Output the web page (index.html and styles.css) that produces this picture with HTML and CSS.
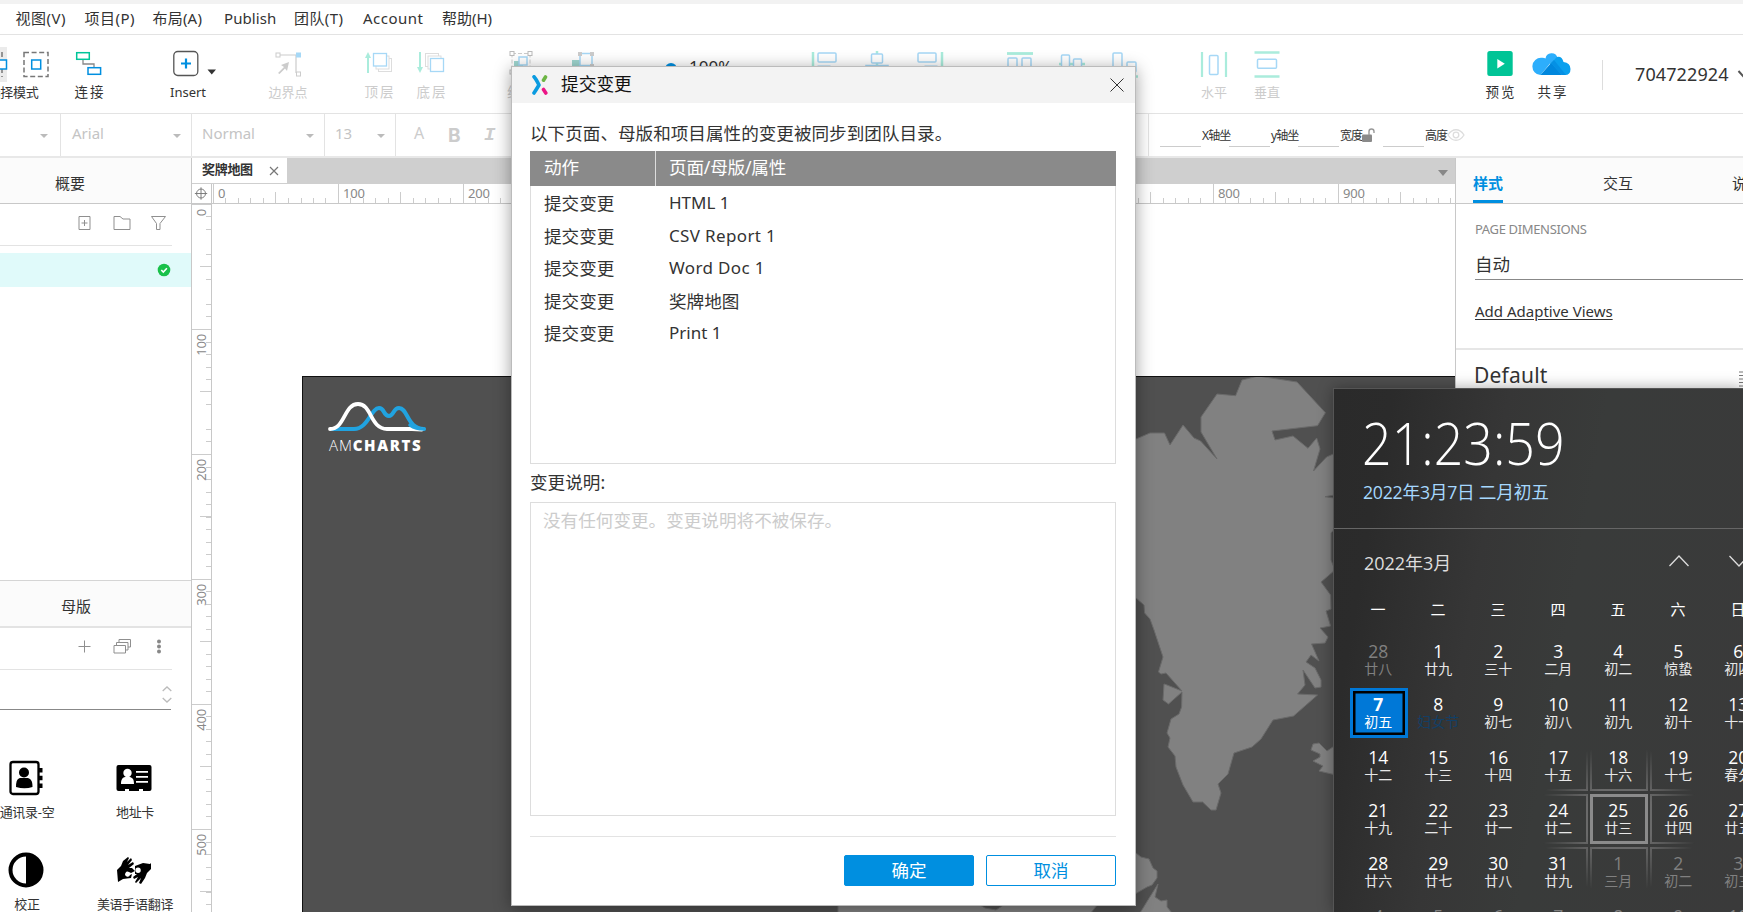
FILE: index.html
```
<!DOCTYPE html>
<html lang="zh-CN">
<head>
<meta charset="utf-8">
<title>提交变更</title>
<link rel="stylesheet" href="styles.css">
</head>
<body>
<div class="app">
  <nav class="menubar">
    <span class="m-view">视图(V)</span><span class="m-project">项目(P)</span><span class="m-layout">布局(A)</span><span class="m-publish">Publish</span><span class="m-team">团队(T)</span><span class="m-account">Account</span><span class="m-help">帮助(H)</span>
  </nav>

  <header class="toolbar">
    <div class="tool tool-select">
      <svg width="56" height="36" viewBox="0 0 56 36"><rect width="7" height="35" fill="#ebebeb"/><path d="M2 5v25" stroke="#777" stroke-width="1.5" stroke-dasharray="5 3"/><path d="M0 13h6.500v9H0" fill="#fff" stroke="#008fe0" stroke-width="1.500"/><rect x="24" y="5.500" width="24" height="24" fill="none" stroke="#777" stroke-width="1.500" stroke-dasharray="5 2.600"/><rect x="31.700" y="13" width="9" height="9" fill="#fff" stroke="#008fe0" stroke-width="1.500"/></svg>
      <span>选择模式</span>
    </div>
    <div class="tool tool-connect">
      <svg width="28" height="36" viewBox="0 0 28 36"><path d="M8 12v5h11v4" fill="none" stroke="#888" stroke-width="1.300"/><rect x="1.700" y="5.700" width="12.600" height="6.600" fill="#fff" stroke="#00c59a" stroke-width="1.500"/><rect x="13" y="20.700" width="12.600" height="6.600" fill="#fff" stroke="#008fe0" stroke-width="1.500"/></svg>
      <span class="wide">连接</span>
    </div>
    <div class="tool tool-insert">
      <svg width="44" height="36" viewBox="0 0 44 36"><rect x=".8" y="4.500" width="24" height="24" rx="4" fill="#fff" stroke="#555" stroke-width="1.300"/><path d="M13 11.500v10M8 16.500h10" stroke="#008fe0" stroke-width="2.200"/><path d="M34.500 22.500h8.500l-4.250 5z" fill="#333"/></svg>
      <span>Insert</span>
    </div>
    <div class="tool tool-edge dim">
      <svg width="28" height="36" viewBox="0 0 28 36"><path d="M4 8h18v18" fill="none" stroke="#ccc" stroke-width="1.200"/><rect x="2" y="6" width="4" height="4" fill="#fff" stroke="#ccc"/><rect x="22" y="5.500" width="5" height="5" fill="#a6d8f6"/><rect x="22.500" y="25" width="4" height="4" fill="#fff" stroke="#ccc"/><path d="M4 26l6-6-3-2 8-3-2 9-2-2.500-5.500 5.500z" fill="#ccc"/></svg>
      <span>边界点</span>
    </div>
    <div class="tool tool-top dim">
      <svg width="28" height="36" viewBox="0 0 28 36"><path d="M3 26V8" stroke="#aaecdc" stroke-width="2"/><path d="M0 11l3-6 3 6z" fill="#aaecdc"/><rect x="13.500" y="11.500" width="13" height="13" fill="#fff" stroke="#ddd"/><rect x="11" y="9" width="13" height="13" fill="#fff" stroke="#ddd"/><rect x="8.500" y="6.500" width="13" height="12.500" fill="#fff" stroke="#a6d8f6" stroke-width="1.300"/></svg>
      <span class="wide">顶层</span>
    </div>
    <div class="tool tool-bottom dim">
      <svg width="28" height="36" viewBox="0 0 28 36"><path d="M3 5v17" stroke="#aaecdc" stroke-width="2"/><path d="M0 20l3 6 3-6z" fill="#aaecdc"/><rect x="8.500" y="6.500" width="13" height="13" fill="#fff" stroke="#ddd"/><rect x="11" y="9" width="13" height="13" fill="#fff" stroke="#ddd"/><rect x="13.500" y="11.500" width="13" height="13" fill="#fff" stroke="#a6d8f6" stroke-width="1.300"/></svg>
      <span class="wide">底层</span>
    </div>
    <div class="tool tool-group dim">
      <svg width="28" height="36" viewBox="0 0 28 36"><rect x="4" y="6.500" width="18" height="20" fill="none" stroke="#ccc" stroke-dasharray="4 2"/><rect x="2" y="4.500" width="4" height="4" fill="#fff" stroke="#bbb"/><rect x="20" y="4.500" width="4" height="4" fill="#fff" stroke="#bbb"/><rect x="2" y="23" width="4" height="4" fill="#fff" stroke="#bbb"/><rect x="6" y="14" width="9" height="9" fill="#9fd6cf"/><rect x="11" y="10" width="8" height="8" fill="#fff" stroke="#a6d8f6" stroke-width="1.500"/></svg>
      <span class="wide">组合</span>
    </div>
    <div class="tool tool-ungroup dim">
      <svg width="28" height="36" viewBox="0 0 28 36"><rect x="4" y="13" width="10" height="10" fill="#9fd6cf"/><rect x="12" y="6.500" width="12" height="12" fill="#fff" stroke="#a6d8f6" stroke-width="1.500"/><path d="M10 5h4v4h-4zM22 5h4v4h-4zM22 17h4v4h-4z" fill="#ccc"/></svg>
    </div>
    <div class="tool tool-zoom"><i></i><b>100%</b></div>
    <div class="tool tool-al dim"><svg width="28" height="36" viewBox="0 0 28 36"><path d="M2 5v25" stroke="#aaecdc" stroke-width="2.500"/><rect x="7" y="6" width="18" height="9" rx="1" fill="#fff" stroke="#a6d8f6" stroke-width="1.500"/><rect x="7" y="19" width="12" height="9" fill="#fff" stroke="#a6d8f6"/></svg></div>
    <div class="tool tool-ac dim"><svg width="28" height="36" viewBox="0 0 28 36"><path d="M14 4v27" stroke="#aaecdc" stroke-width="2.500"/><rect x="8.500" y="7" width="11" height="9" rx="1" fill="#fff" stroke="#a6d8f6" stroke-width="1.500"/><rect x="3" y="18.500" width="22" height="9" fill="#fff" stroke="#a6d8f6" stroke-width="1.500"/></svg></div>
    <div class="tool tool-ar dim"><svg width="28" height="36" viewBox="0 0 28 36"><path d="M26 5v25" stroke="#aaecdc" stroke-width="2.500"/><rect x="2" y="6" width="18" height="9" rx="1" fill="#fff" stroke="#a6d8f6" stroke-width="1.500"/><rect x="9" y="19" width="12" height="9" fill="#fff" stroke="#a6d8f6"/></svg></div>
    <div class="tool tool-at dim"><svg width="28" height="36" viewBox="0 0 28 36"><path d="M1 6.500h26" stroke="#aaecdc" stroke-width="2.800"/><rect x="2" y="11" width="9" height="18" rx="1" fill="#fff" stroke="#a6d8f6" stroke-width="1.500"/><rect x="16" y="11" width="9" height="12" rx="1" fill="#fff" stroke="#a6d8f6" stroke-width="1.500"/></svg></div>
    <div class="tool tool-am dim"><svg width="28" height="36" viewBox="0 0 28 36"><path d="M1 17h26" stroke="#aaecdc" stroke-width="2.500"/><rect x="3.500" y="8" width="8" height="18" rx="1" fill="#fff" stroke="#a6d8f6" stroke-width="1.500"/><rect x="15.500" y="12" width="8" height="10" rx="1" fill="#fff" stroke="#a6d8f6" stroke-width="1.500"/></svg></div>
    <div class="tool tool-ab dim"><svg width="28" height="36" viewBox="0 0 28 36"><path d="M1 29.500h26" stroke="#aaecdc" stroke-width="2.500"/><rect x="2" y="6" width="9" height="19" rx="1" fill="#fff" stroke="#a6d8f6" stroke-width="1.500"/><rect x="16" y="15" width="9" height="10" rx="1" fill="#fff" stroke="#a6d8f6" stroke-width="1.500"/></svg></div>
    <div class="tool tool-dh dim"><svg width="28" height="36" viewBox="0 0 28 36"><path d="M2 5v25M26 5v25" stroke="#aaecdc" stroke-width="2.200"/><rect x="9.500" y="8.500" width="8.500" height="19" rx="1" fill="#fff" stroke="#a6d8f6" stroke-width="1.500"/></svg><span>水平</span></div>
    <div class="tool tool-dv dim"><svg width="28" height="36" viewBox="0 0 28 36"><path d="M1.500 5.500h25M1.500 29.500h25" stroke="#aaecdc" stroke-width="2.500"/><rect x="4.500" y="12.300" width="19" height="9" rx="1" fill="#fff" stroke="#a6d8f6" stroke-width="1.500"/></svg><span>垂直</span></div>
    <div class="tool tool-preview"><svg width="28" height="36" viewBox="0 0 28 36"><rect x="1.300" y="4" width="25.400" height="25" rx="2.500" fill="#00c496"/><path d="M11.300 12l7.500 4.700-7.500 4.700z" fill="#fff"/></svg><span class="wide">预览</span></div>
    <div class="tool tool-share"><svg width="40" height="36" viewBox="0 0 40 36"><path d="M8.500 28A8.600 8.600 0 0 1 9.500 10.800 Q12 10.500 13.500 11.500 A6.200 6.200 0 0 1 25.500 10.500L18 16.500z" fill="#2daefc"/><path d="M18 16.500L25 10Q30 9 31.500 15Q38.500 16 38.500 22Q38.500 28 33 28H29.500z" fill="#0aa0ee"/><path d="M8.500 28L19 16l11 12z" fill="#0087dd"/><path d="M19 16l11 12h4L22 13z" fill="#0590e4"/></svg><span class="wide">共享</span></div>
    <div class="account"><span>704722924</span><svg width="12" height="8" viewBox="0 0 12 8"><path d="M1.500 1l4.500 5 4.500-5" fill="none" stroke="#555" stroke-width="2"/></svg></div>
  </header>

  <div class="formatbar">
    <div class="combo c-style"><i></i></div>
    <div class="combo c-font">Arial<i></i></div>
    <div class="combo c-weight">Normal<i></i></div>
    <div class="combo c-size">13<i></i></div>
    <div class="glyphs"><span class="g-a">A</span><span class="g-b">B</span><span class="g-i">I</span></div>
    <div class="coords">
      <u></u><span>X轴坐</span><u></u><span>y轴坐</span><u></u><span>宽度</span>
      <svg class="lock" width="13" height="16" viewBox="0 0 13 16"><rect y="7.500" width="10" height="7.500" rx="1" fill="#8a8a8a"/><path d="M7 8V4.500a2.500 2.500 0 0 1 5 0V6" fill="none" stroke="#999" stroke-width="1.400"/></svg>
      <u></u><span>高度</span>
      <svg width="18" height="14" viewBox="0 0 18 14"><path d="M1 7c4.500-7 11.500-7 16 0-4.500 7-11.500 7-16 0z" fill="none" stroke="#ddd" stroke-width="1.300"/><circle cx="9" cy="7" r="2.800" fill="none" stroke="#ddd" stroke-width="1.300"/></svg>
    </div>
  </div>

  <main class="work">
    <aside class="left">
      <h2 class="panel-title">概要</h2>
      <div class="outline">
        <div class="actions">
          <svg width="95" height="20" viewBox="0 0 95 20" fill="none" stroke="#8f8f8f"><path d="M1 3.500h11v13H1zM6.500 7v6M3.500 10h6M36 16.500v-13h6l3 2.500h7v10.500zM73.500 3.500h14L82 10.500v6h-3.500v-6z"/></svg>
        </div>
        <div class="page-row"><svg width="14" height="14" viewBox="0 0 14 14"><circle cx="7" cy="7" r="6.300" fill="#19c14a"/><path d="M4.300 7l2 2 3.600-3.700" fill="none" stroke="#fff" stroke-width="1.600"/></svg></div>
      </div>
      <h2 class="panel-title masters-title">母版</h2>
      <div class="masters">
        <div class="actions">
          <svg width="95" height="20" viewBox="0 0 95 20" fill="none" stroke="#8f8f8f"><path d="M.5 10.500h12M6.500 4.500v12M36 9.500h11.500v7.500H36zM38.500 9.500v-3H50V14h-2.500M41 6.500v-3h11.500V11H50"/><g fill="#888" stroke="none"><circle cx="81" cy="5.500" r="2"/><circle cx="81" cy="10.500" r="2"/><circle cx="81" cy="15.500" r="2"/></g></svg>
        </div>
        <div class="stepper"><svg width="10" height="17" viewBox="0 0 10 17"><path d="M.7 5l4.300-4 4.300 4M.7 12l4.300 4 4.300-4" fill="none" stroke="#bbb" stroke-width="1.300"/></svg></div>
        <div class="library">
          <figure><svg width="36" height="36" viewBox="0 0 36 36"><rect x="2.500" y="2" width="28" height="32" rx="2.500" fill="#fff" stroke="#000" stroke-width="2.300"/><circle cx="16" cy="12.500" r="5" /><path d="M8 27c0-7 2-8.500 4-9h8c3 1 4.500 3 4.500 9q-8 2.500-16.500 0z"/><path d="M31 8h3.500v4.500H31zM31 15.700h3.500v4.500H31zM31 23.500h3.500V28H31z"/></svg><figcaption>通讯录-空</figcaption></figure>
          <figure><svg width="36" height="36" viewBox="0 0 36 36"><rect x=".5" y="5" width="35" height="26" rx="2"/><path d="M9 31v-2h4v2zM23 31v-2h4v2z" fill="#fff"/><circle cx="11.500" cy="13" r="4.200" fill="#fff"/><path d="M5 24c0-5 2-6.500 4-7h5c3 1 4 2.500 4 7zM20 11h12v1.800H20zM20 16h12v1.800H20zM20 21h12v1.800H20z" fill="#fff"/></svg><figcaption>地址卡</figcaption></figure>
          <figure><svg width="36" height="36" viewBox="0 0 36 36"><circle cx="18" cy="18" r="15.500" fill="#fff" stroke="#000" stroke-width="4"/><path d="M18 2a16 16 0 0 1 0 32z"/></svg><figcaption>校正</figcaption></figure>
          <figure><svg width="36" height="36" viewBox="0 0 36 36"><path d="M1 18l4-4 2-5 5-4 1 1-2 4 4-4 1 2-4 5 5-3 1 2-5 4h3l3 3-4 2-2-1a2.500 2.500 0 1 0 1 3l2-1-1 4-8 1-5 3z"/><path d="M35 17l-4 4-2 5-4 6-2-1 2-5-5 5-1-1 3-5-4 2-1-2 4-3h-2v-8l8-3 7 1 1-1zM22 15.500a2.700 2.700 0 1 0 .1 5.400 2.700 2.700 0 0 0-.1-5.400z" fill-rule="evenodd"/></svg><figcaption>美语手语翻译</figcaption></figure>
        </div>
      </div>
    </aside>

    <section class="stage">
      <div class="tabs"><div class="tab">奖牌地图<svg width="10" height="10" viewBox="0 0 10 10"><path d="M1 1l8 8M9 1L1 9" stroke="#777" stroke-width="1.200"/></svg></div><i class="tabs-more"></i></div>
      <div class="ruler-h">
        <svg class="origin" width="20" height="20" viewBox="0 0 20 20" fill="none" stroke="#777"><circle cx="9.500" cy="9.500" r="4.700"/><path d="M9.500 3v13M3 9.500h13"/></svg>
        <div class="marks"><span>0</span><span>100</span><span>200</span><span></span><span></span><span></span><span></span><span></span><span>800</span><span>900</span></div>
      </div>
      <div class="stage-body">
        <div class="ruler-v"><span>0</span><span>100</span><span>200</span><span>300</span><span>400</span><span>500</span></div>
        <div class="canvas">
          <div class="artboard">
            <div class="brand">
              <svg width="100" height="32" viewBox="328 401 100 32" fill="none" stroke-width="4" stroke-linecap="round"><path d="M332 429H354C368 429 371 408 379 408C385 408 383 416 389 416C394 416 393 408 399 408C408 408 407 429 424 429" stroke="#21a3e0"/><path d="M330 429C345 429 344 404 358 404C372 404 370 429 387 429H412L422 429.500" stroke="#fff" stroke-width="3.800"/><path d="M410 425Q416 429 424 429" stroke="#21a3e0" stroke-width="3.500"/></svg>
              <div class="brand-name">AM<b>CHARTS</b></div>
            </div>
            <svg class="map" width="1153" height="535" viewBox="303 377 1153 535"><g fill="#818181" stroke="#6a6a6a" stroke-width="1">
              <path d="M1100 445L1136 439 1150 433 1164.500 433 1170 445 1183 425 1194 438 1200.600 441 1217 459 1201 432V417L1217 394 1235.600 395.700 1242 380 1258 376 1297 382 1325.400 412.700 1317.500 425.700 1272 431 1275 440 1293 436 1308 448.300 1316.700 438 1320 449 1313.500 471 1326.600 457 1340 451V494L1325 496.700 1340 499V523L1331 533V560L1335 570 1321 582 1330.600 595 1331 609 1326 611 1330.600 626 1320 628 1328 637 1325 643 1311.500 644 1319 661 1311 655 1306 662 1315 668 1321 680V687L1315 688 1303 670 1305 685 1297.600 694 1317.500 695 1293.600 716 1273 720 1261 739 1252 747 1234 753 1228 774 1218 784 1221 793 1216 810H1211L1202.600 802H1193L1183 785 1176 767 1175 756 1168 747 1170 738 1167 733 1171 719 1179 714 1181.600 707 1182 692 1168.500 704 1163 700 1164 684 1167 685 1182 691 1166 673 1161 674 1158.500 672 1163 657 1154 630 1150 619 1144.600 613 1144 605 1136 598 1100 570z"/>
              <path d="M1340 742L1327 751 1319 743 1313 744 1311 750 1320 754V757L1313 761 1323 766 1319 771 1340 776z"/>
              <path d="M1120 853H1136L1141 857 1149 859 1153 868 1157 871V878L1152 885 1147 887 1130 897z"/>
              <path d="M1158 884L1155 897 1161 901 1167 900V907L1172 913H1140L1148.600 899z"/>
              <path d="M838 900H972L985 908 996 910 1005 904H1098L1090 914H838z"/>
            </g></svg>
          </div>
        </div>
      </div>
    </section>

    <aside class="right">
      <div class="rtabs"><span class="on">样式</span><span class="t2">交互</span><span class="t3">说明</span></div>
      <div class="rbody">
        <div class="dim-label">PAGE DIMENSIONS</div>
        <div class="dim-value">自动</div>
        <a class="adaptive">Add Adaptive Views</a>
      </div>
      <div class="rstyle"><span>Default</span><svg width="10" height="18" viewBox="0 0 10 18"><path d="M0 1h10M0 4.500h10M0 8h10M0 11.500h10M0 15h10" stroke="#777"/></svg></div>
    </aside>
  </main>
</div>

<section class="dialog">
  <header class="dlg-head">
    <svg width="16" height="20" viewBox="0 0 16 20" fill="none" stroke-width="3.600" stroke-linecap="round"><path d="M2 1.800Q4 4 7 10Q4 15 2 18" stroke="#0a9be0" stroke-linejoin="round"/><path d="M11.500 5.200L13.500 2" stroke="#6cb544"/><path d="M11.500 14.500L13.800 18" stroke="#ec1586"/></svg>
    <h1>提交变更</h1>
    <svg class="close" width="14" height="14" viewBox="0 0 14 14"><path d="M.5.500l13 13M13.500.500l-13 13" stroke="#333"/></svg>
  </header>
  <div class="dlg-body">
    <p class="intro">以下页面、母版和项目属性的变更被同步到团队目录。</p>
    <div class="changes">
      <div class="crow chead"><span>动作</span><span>页面/母版/属性</span></div>
      <div class="crow"><span>提交变更</span><span class="lat">HTML 1</span></div>
      <div class="crow"><span>提交变更</span><span class="lat wide-lat">CSV Report 1</span></div>
      <div class="crow"><span>提交变更</span><span class="lat wide-lat">Word Doc 1</span></div>
      <div class="crow"><span>提交变更</span><span>奖牌地图</span></div>
      <div class="crow"><span>提交变更</span><span class="lat">Print 1</span></div>
    </div>
    <p class="note-label">变更说明:</p>
    <div class="note">没有任何变更。变更说明将不被保存。</div>
    <footer class="dlg-foot"><button class="btn primary">确定</button><button class="btn">取消</button></footer>
  </div>
</section>

<section class="clock">
  <div class="now">
    <div class="time">21:23:59</div>
    <div class="date">2022年3月7日 二月初五</div>
  </div>
  <div class="month"><span>2022年3月</span><svg width="80" height="12" viewBox="0 0 80 12" fill="none" stroke="#ddd" stroke-width="1.300"><path d="M.5 11l9.500-10 9.500 10M60.500 1l9.500 10 9.500-10"/></svg></div>
  <div class="week"><span>一</span><span>二</span><span>三</span><span>四</span><span>五</span><span>六</span><span>日</span></div>
  <div class="days">
    <div class="off">28<small>廿八</small></div><div>1<small>廿九</small></div><div>2<small>三十</small></div><div>3<small>二月</small></div><div>4<small>初二</small></div><div>5<small>惊蛰</small></div><div>6<small>初四</small></div>
    <div class="today">7<small>初五</small></div><div>8<small class="fest">妇女节</small></div><div>9<small>初七</small></div><div>10<small>初八</small></div><div>11<small>初九</small></div><div>12<small>初十</small></div><div>13<small>十一</small></div>
    <div>14<small>十二</small></div><div>15<small>十三</small></div><div>16<small>十四</small></div><div>17<small>十五</small></div><div>18<small>十六</small></div><div>19<small>十七</small></div><div>20<small>春分</small></div>
    <div>21<small>十九</small></div><div>22<small>二十</small></div><div>23<small>廿一</small></div><div>24<small>廿二</small></div><div class="hover">25<small>廿三</small></div><div>26<small>廿四</small></div><div>27<small>廿五</small></div>
    <div>28<small>廿六</small></div><div>29<small>廿七</small></div><div>30<small>廿八</small></div><div>31<small>廿九</small></div><div class="off">1<small>三月</small></div><div class="off">2<small>初二</small></div><div class="off">3<small>初三</small></div>
    <div class="off">4</div><div class="off">5</div><div class="off">6</div><div class="off">7</div><div class="off">8</div><div class="off">9</div><div class="off">10</div>
  </div>
  <div class="glow"><i></i><i></i><i></i><i></i><i></i><i></i><i></i><i></i><i></i></div>
</section>
</body>
</html>
```

FILE: styles.css
```
* { box-sizing: border-box; }
body {
  margin: 0; width: 1743px; height: 912px; overflow: hidden; position: relative;
  font-family: "Noto Sans", "Noto Sans CJK SC", sans-serif; color: #333; background: #fff;
}
h1, h2, p, figure { margin: 0; font-weight: 400; }
svg { display: block; flex: none; }
.app { display: flex; flex-direction: column; height: 912px; white-space: nowrap; }

/* menu */
.menubar { height: 35px; border-top: 4px solid #f2f2f2; border-bottom: 1px solid #e3e3e3; display: flex; align-items: center; font-size: 15px; line-height: 28px; padding-bottom: 3px; }
.menubar span { flex: none; }
.m-view { margin-left: 15.500px; width: 69px; letter-spacing: .5px; }
.m-project { width: 68px; letter-spacing: .5px; }
.m-layout { width: 71.500px; letter-spacing: .2px; }
.m-publish { width: 70px; letter-spacing: .1px; }
.m-team { width: 69px; letter-spacing: .4px; }
.m-account { width: 79px; letter-spacing: .5px; }

/* toolbar */
.toolbar { height: 79px; flex: none; border-bottom: 1px solid #e3e3e3; display: flex; align-items: flex-start; padding-top: 12px; overflow: hidden; }
.tool { flex: none; width: 52px; display: flex; flex-direction: column; align-items: center; font-size: 13px; line-height: 20px; }
.tool span { margin-top: -1px; }
.tool .wide { letter-spacing: 2px; margin-right: -2px; font-size: 13.500px; }
.dim { color: #ccc; }
.tool-select { width: 56px; }
.tool-select span { margin-left: -30px; letter-spacing: -.2px; }
.tool-connect { margin-left: 7px; }
.tool-insert { margin-left: 47px; }
.tool-insert svg { margin-left: 14px; }
.tool-edge { margin-left: 48px; }
.tool-top { margin-left: 39px; }
.tool-group { margin-left: 38px; padding-left: 1px; }
.tool-ungroup { margin-left: 9px; }
.tool-zoom { margin-left: 52px; width: 80px; flex-direction: row; padding: 10px 0 0 5px; gap: 12px; font-size: 17px; }
.tool-zoom b { font-weight: 400; line-height: 20px; }
.tool-zoom i { width: 12px; height: 12px; border-radius: 6px; background: #008fe0; margin-top: 3px; }
.tool-al { margin-left: 59px; }
.tool-ar { margin-left: 1px; }
.tool-at { margin-left: 38px; }
.tool-ab { margin-left: 1px; }
.tool-dh { margin-left: 37px; }
.tool-dv { margin-left: 1px; }
.tool-preview { margin-left: 181px; }
.account { margin: 13px 0 0 24px; padding: 0 0 3px 32px; height: 30px; border-left: 1px solid #ddd; display: flex; align-items: center; gap: 8px; font-size: 18px; letter-spacing: .1px; flex: none; }

/* format bar */
.formatbar { height: 44px; flex: none; display: flex; border-bottom: 2px solid #e8e8e8; color: #c4c4c4; font-size: 15px; }
.combo { display: flex; align-items: center; justify-content: space-between; border-right: 1px solid #e3e3e3; padding: 0 10px 4px 11px; flex: none; }
.combo i { width: 0; border: 4px solid transparent; border-top: 4px solid #bbb; border-bottom: 0; margin-top: 6px; }
.c-style { width: 61px; justify-content: flex-end; padding-right: 12px; }
.c-font { width: 131px; }
.c-weight { width: 133px; padding-left: 10px; }
.c-size { width: 71px; padding-left: 10px; }
.glyphs { width: 753px; flex: none; border-right: 1px solid #e3e3e3; display: flex; color: #ccc; font-size: 16px; line-height: 38px; padding-left: 18px; }
.glyphs span { width: 34px; }
.g-b { font: bold 19px/43px Inter, sans-serif; }
.g-i { font: italic bold 19px/43px "Liberation Mono", monospace; padding-left: 2px; }
.glyphs .g-a { line-height: 38px; }
.coords { display: flex; align-items: center; color: #333; font-size: 12px; letter-spacing: -.9px; padding-left: 11px; padding-bottom: 1px; flex: none; }
.coords u { width: 41px; height: 24px; border-bottom: 1px solid #ccc; text-decoration: none; }
.coords span { width: 28px; padding-left: 1px; }
.coords span:nth-of-type(n+3) { width: 23px; padding-left: 1px; }
.coords .lock { margin-right: 8px; }

/* work area */
.work { flex: 1; min-height: 0; display: flex; }
.left { width: 192px; flex: none; border-right: 1px solid #c8c8c8; overflow: hidden; display: flex; flex-direction: column; }
.panel-title { height: 46px; flex: none; background: #fbfbfb; border-bottom: 1px solid #c8c8c8; font-size: 15px; line-height: 50px; padding-left: 55px; }
.outline { height: 376px; flex: none; }
.actions { height: 42px; width: 172px; border-bottom: 1px solid #e3e3e3; padding: 9px 0 0 78px; }
.page-row { margin-top: 7px; height: 34px; background: #e0fafa; padding: 10px 0 0 157px; }
.masters-title { height: 48px; border-top: 1px solid #d5d5d5; border-bottom: 2px solid #e3e3e3; padding-left: 61px; }
.masters .actions { padding-top: 8px; }
.stepper { width: 171px; height: 40px; border-bottom: 1px solid #888; padding: 16px 0 0 162px; }
.library { display: grid; grid-template-columns: 108px 108px; margin-left: -27px; padding-top: 50px; row-gap: 7px; font-size: 13px; letter-spacing: -.3px; }
.library figure { display: flex; flex-direction: column; align-items: center; gap: 6px; height: 85px; }
.library svg { margin-left: -2px; }

.stage { width: 1264px; flex: none; overflow: hidden; border-right: 1px solid #c8c8c8; display: flex; flex-direction: column; }
.tabs { height: 26px; flex: none; background: #cfcfcf; display: flex; justify-content: space-between; padding-right: 7px; border-bottom: 1px solid #cfcfcf; }
.tab { width: 95px; background: #fff; font-size: 13px; font-weight: 600; letter-spacing: -.3px; line-height: 22px; padding-left: 10px; display: flex; align-items: flex-start; gap: 16px; }
.tab svg { margin-top: 8px; }
.tabs-more { border: 5px solid transparent; border-top: 6px solid #888; border-bottom: 0; height: 0; margin-top: 12px; }
.ruler-h { height: 20px; flex: none; display: flex; border-bottom: 1px solid #c8c8c8; }
.origin { border-right: 1px solid #c8c8c8; }
.marks { display: flex; flex: 1; padding-left: 1px; font-size: 13px; line-height: 18px; color: #888; }
.marks span {
  width: 125px; flex: none; padding-left: 4px; border-left: 1px solid #ccc; letter-spacing: -.2px;
  background:
    linear-gradient(#ccc, #ccc) 61px 100% / 1px 11px no-repeat,
    repeating-linear-gradient(90deg, transparent 0 11.500px, #ccc 11.500px 12.500px) 0 100% / 100% 5px no-repeat;
}
.stage-body { flex: 1; display: flex; min-height: 0; }
.ruler-v { width: 20px; flex: none; border-right: 1px solid #c8c8c8; overflow: hidden; font-size: 13px; color: #888; }
.ruler-v span {
  display: block; height: 125px; width: 19px; padding-top: 4px; border-top: 1px solid #ccc;
  writing-mode: sideways-lr; text-align: right; line-height: 18px; letter-spacing: -.2px;
  background:
    linear-gradient(#ccc, #ccc) 100% 61px / 11px 1px no-repeat,
    repeating-linear-gradient(180deg, transparent 0 11.500px, #ccc 11.500px 12.500px) 100% 0 / 5px 100% no-repeat;
}
.canvas { flex: 1; padding: 172px 0 0 90px; }
.artboard { height: 536px; border: 1px solid #111; border-width: 1px 0 0 1px; background: #505050; display: grid; overflow: hidden; }
.brand, .map { grid-area: 1 / 1; }
.brand { padding: 24px 0 0 25px; color: #fff; }
.brand-name { font: 300 15px/16px "Open Sans", sans-serif; letter-spacing: .9px; margin: 4px 0 0 1px; }
.brand-name b { font-weight: 800; letter-spacing: 1.600px; }

.right { flex: 1; overflow: hidden; }
.rtabs { height: 46px; background: #fbfbfb; border-bottom: 1px solid #c8c8c8; display: flex; font-size: 15px; padding-left: 17px; line-height: 51px; }
.rtabs span { flex: none; height: 45px; }
.rtabs .on { color: #008fe0; font-weight: 700; border-bottom: 3px solid #008fe0; width: 30px; }
.t2 { margin-left: 100px; width: 30px; }
.t3 { margin-left: 99px; }
.rbody { height: 146px; padding: 15px 0 0 19px; border-bottom: 2px solid #e6e6e6; }
.dim-label { font-size: 13px; line-height: 20px; color: #888; letter-spacing: -.35px; }
.dim-value { font-size: 17.500px; line-height: 36px; margin-top: 7px; height: 34px; border-bottom: 1px solid #888; }
.adaptive { display: inline-block; font-size: 15px; line-height: 20px; margin-top: 21px; text-decoration: underline; text-underline-offset: 2px; }
.rstyle { display: flex; justify-content: space-between; padding: 8px 0 0 18px; font-size: 21px; letter-spacing: .2px; line-height: 34px; }
.rstyle svg { margin: 13px -6px 0 0; }

/* dialog */
.dialog { position: absolute; left: 511px; top: 66px; width: 625px; height: 840px; background: #fff; border: 1px solid #bbb; box-shadow: 0 3px 16px rgba(0,0,0,.38); white-space: nowrap; }
.dlg-head { height: 36px; background: #f3f3f3; display: flex; align-items: center; padding: 0 11px 0 20px; }
.dlg-head h1 { font-size: 17.700px; color: #111; margin-left: 13px; flex: 1; line-height: 34px; padding-bottom: 2px; }
.dlg-body { padding: 16px 19px 0 18px; font-size: 17.600px; }
.intro { line-height: 28px; height: 32px; }
.changes { height: 313px; border: 1px solid #ddd; border-top: 0; }
.crow { display: grid; grid-template-columns: 125px 1fr; height: 32.500px; line-height: 32px; padding-left: 13px; }
.crow .lat { font-size: 17px; }
.crow .wide-lat { letter-spacing: .35px; }
.chead { height: 35px; margin: 0 -1px 1px; background: #8a8a8a; color: #fff; line-height: 33px; padding-left: 14px; letter-spacing: -.2px; }
.chead span + span { box-shadow: -13px 0 0 #8a8a8a, -14px 0 0 #ddd; }
.note-label { height: 38px; line-height: 36px; }
.note { height: 314px; border: 1px solid #ddd; padding: 0 12px; line-height: 34px; color: #ccc; }
.dlg-foot { margin-top: 20px; border-top: 1px solid #e3e3e3; padding-top: 18px; display: flex; justify-content: flex-end; gap: 12px; }
.btn { width: 130px; height: 31px; border: 1px solid #008fe0; border-radius: 2px; background: #fff; color: #008fe0; font: 17.500px/26px "Noto Sans", "Noto Sans CJK SC", sans-serif; padding: 0 0 2px; }
.primary { background: #008fe0; color: #fff; }

/* clock flyout */
.clock { position: absolute; left: 1333px; top: 388px; width: 410px; height: 524px; overflow: hidden; color: #fff; border: 1px solid #555; border-width: 1px 0 0 1px; background: linear-gradient(100deg, #2a2a2a 0, #2b2b2b 12%, #363636 35%, #393b3a 55%, #3a3a3a 100%); box-shadow: 0 0 14px rgba(0,0,0,.35); white-space: nowrap; font-family: "Open Sans", "Noto Sans CJK SC", sans-serif; }
.now { height: 140px; border-bottom: 1px solid #666; padding-left: 28px; }
.time { font-size: 59px; font-weight: 300; line-height: 70px; padding-top: 18px; height: 86px; transform: scaleX(.88); transform-origin: 0 0; }
.date { color: #a6d8ff; font-size: 17.700px; line-height: 34px; letter-spacing: -.25px; padding-left: 1px; }
.month { display: flex; height: 65px; align-items: center; padding-left: 30px; font-size: 18px; letter-spacing: -.05px; color: #ddd; width: 410px; justify-content: space-between; padding-right: -5px; overflow: visible; }
.month svg { margin-right: -5px; margin-top: -1px; }
.week, .days { display: grid; grid-template-columns: repeat(7, 58px); column-gap: 2px; margin-left: 16px; text-align: center; }
.week { font-size: 15px; line-height: 29px; height: 41px; padding-top: 1px; margin-left: 15px; }
.days { row-gap: 3px; font-size: 17.500px; }
.days > div { height: 50px; line-height: 20px; padding: 6px 1.500px 0 0; }
.days small { display: block; font-size: 14px; line-height: 16px; color: #e8e8e8; }
.days .off, .days .off small { color: #808080; }
.days .fest { color: #123f66; }
.days .today { background: #0078d7; border: 3px solid #0078d7; box-shadow: inset 0 0 0 2.500px #000; padding-top: 3px; font-weight: 700; }
.days .today small { font-weight: 400; color: #fff; }
.days .hover { border: 3px solid #8b8b8b; padding-top: 3px; }
.glow { position: absolute; left: 196px; top: 352px; display: grid; grid-template-columns: repeat(3, 58px); grid-auto-rows: 50px; gap: 3px 2px; mask: radial-gradient(80px 75px, #000 45%, transparent 100%); }
.glow i { border: 2.500px solid #6a6a6a; }
.glow i:nth-child(5) { border-color: transparent; }
```
